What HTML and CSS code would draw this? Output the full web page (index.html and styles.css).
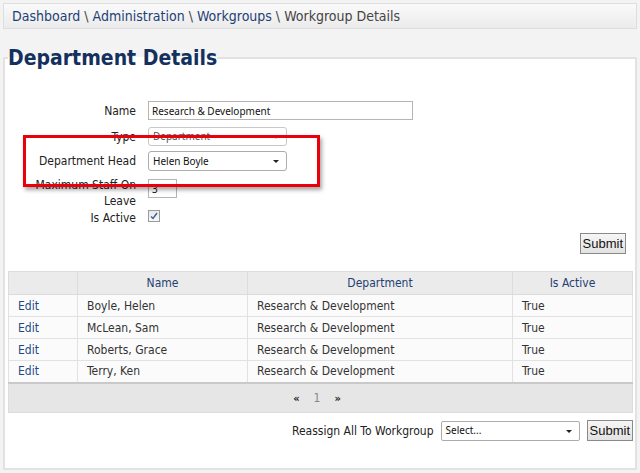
FILE: index.html
```html
<!DOCTYPE html>
<html lang="en">
<head>
  <meta charset="UTF-8">
  <title>Workgroup Details</title>
  <link rel="stylesheet" href="styles.css">
</head>
<body>

<div class="breadcrumb">
  <a href="#">Dashboard</a> \ <a href="#">Administration</a> \ <a href="#">Workgroups</a> \ <span>Workgroup Details</span>
</div>

<fieldset class="details">
  <legend>Department Details</legend>

  <div class="form">
    <div class="row row-name">
      <label for="name">Name</label>
      <input type="text" id="name" class="text wide" value="Research &amp; Development">
    </div>
    <div class="row row-type">
      <label>Type</label>
      <div class="select disabled"><span>Department</span></div>
    </div>
    <div class="row row-head">
      <label>Department Head</label>
      <div class="select"><span>Helen Boyle</span></div>
    </div>
    <div class="row row-leave">
      <label for="leave">Maximum Staff On Leave</label>
      <input type="text" id="leave" class="text short" value="3">
    </div>
    <div class="row row-active">
      <label>Is Active</label>
      <span class="check">
        <svg width="8" height="8" viewBox="0 0 8 8"><path d="M1 4.5 L3 6.5 L7 1" fill="none" stroke="#3d5f9a" stroke-width="1.4"/></svg>
      </span>
    </div>

    <!-- highlight box drawn over the form -->
    <div class="highlight"></div>
  </div>

  <div class="actions">
    <button class="btn">Submit</button>
  </div>

  <table class="grid">
    <thead>
      <tr>
        <th class="c-edit"></th>
        <th class="c-name">Name</th>
        <th class="c-dept">Department</th>
        <th>Is Active</th>
      </tr>
    </thead>
    <tbody>
      <tr><td><a href="#">Edit</a></td><td>Boyle, Helen</td><td>Research &amp; Development</td><td>True</td></tr>
      <tr><td><a href="#">Edit</a></td><td>McLean, Sam</td><td>Research &amp; Development</td><td>True</td></tr>
      <tr><td><a href="#">Edit</a></td><td>Roberts, Grace</td><td>Research &amp; Development</td><td>True</td></tr>
      <tr><td><a href="#">Edit</a></td><td>Terry, Ken</td><td>Research &amp; Development</td><td>True</td></tr>
    </tbody>
    <tfoot>
      <tr>
        <td colspan="4" class="pager"><span class="arrow">&laquo;</span><span class="page">1</span><span class="arrow">&raquo;</span></td>
      </tr>
    </tfoot>
  </table>

  <div class="reassign">
    <label>Reassign All To Workgroup</label>
    <div class="select small"><span>Select...</span></div>
    <button class="btn">Submit</button>
  </div>
</fieldset>

</body>
</html>
```

FILE: styles.css
```css
/* Page */
* {
  box-sizing: border-box;
}

body {
  margin: 0;
  padding: 3px;
  background: #f3f3f3;
  font-family: "DejaVu Sans Condensed", "DejaVu Sans", sans-serif;
  font-size: 12px;
  color: #333;
}

a {
  color: #1f4a86;
  text-decoration: none;
}

/* Breadcrumb bar */
.breadcrumb {
  height: 26px;
  padding: 4px 8px 0;
  background: linear-gradient(#fafafa, #ebebeb);
  border: 1px solid #dedede;
  font-size: 14px;
  color: #444;
}

.breadcrumb a {
  color: #1f3f75;
}

/* Details fieldset */
.details {
  position: relative;
  margin: 16px 0 0;
  padding: 0 0 27px 3px;
  border: 2px solid #e2e2e2;
  background: #fff;
}

.details legend {
  padding: 0;
  font-size: 21px;
  line-height: 26px;
  font-weight: bold;
  color: #14305e;
}

/* Form rows */
.form {
  position: relative;
  margin-top: 30px;
}

.row {
  display: flex;
  align-items: center;
}

.row label {
  width: 128px;
  margin-right: 12px;
  text-align: right;
  color: #222;
}

.row-name { height: 19px; margin-bottom: 7px; }
.row-type { height: 19px; margin-bottom: 5px; }
.row-head { height: 20px; margin-bottom: 8px; }
.row-leave { align-items: flex-start; height: 30px; }
.row-active { height: 14px; }

.row-leave label {
  margin-top: -2px;
  padding-left: 24px;
  line-height: 16px;
}

.row-active label {
  margin-top: 4px;
}

.text {
  height: 19px;
  padding: 0 3px;
  border: 1px solid #b5b5b5;
  font-family: "Noto Sans", sans-serif;
  font-size: 10px;
  color: #111;
  background: #fff;
}

.text.wide { width: 265px; }
.text.short { width: 29px; }

/* Drop-down look */
.select {
  position: relative;
  width: 139px;
  height: 20px;
  padding: 2px 4px;
  border: 1px solid #acacac;
  border-radius: 3px;
  background: #fff;
  font-family: "Noto Sans", sans-serif;
  font-size: 10px;
  color: #111;
}

.select::after {
  content: "";
  position: absolute;
  right: 7px;
  top: 8px;
  border-left: 3px solid transparent;
  border-right: 3px solid transparent;
  border-top: 3px solid #222;
}

.select.disabled {
  height: 19px;
  padding-top: 1px;
  border-color: #c8c8c8;
  color: #555;
}

.select.disabled::after {
  border-top-color: #aaa;
}

.select.small {
  border-radius: 2px;
  padding-top: 1px;
}

.check {
  display: flex;
  align-items: center;
  justify-content: center;
  width: 12px;
  height: 12px;
  border: 1px solid #9a9a9a;
  background: linear-gradient(#e8e8e8, #f8f8f8);
}

.highlight {
  position: absolute;
  left: 15px;
  top: 34px;
  width: 297px;
  height: 52px;
  border: 3px solid #e8000a;
  box-shadow: 2px 3px 4px rgba(0, 0, 0, 0.35);
}

/* Buttons */
.actions {
  display: flex;
  justify-content: flex-end;
  margin: 10px 9px 17px 0;
}

.btn {
  height: 21px;
  padding: 0 2px;
  border: 1px solid #8a8a8a;
  background: linear-gradient(#f6f6f6, #e2e2e2);
  font-family: "Liberation Sans", Arial, sans-serif;
  font-size: 13px;
  color: #111;
}

/* Data grid */
.grid {
  width: 625px;
  border-collapse: collapse;
  border: 1px solid #dcdcdc;
}

.grid th {
  height: 23px;
  background: #ebebeb;
  border: 1px solid #dcdcdc;
  font-weight: normal;
  color: #1f3f75;
}

.grid td {
  height: 22px;
  padding: 0 9px;
  background: #fbfbfb;
  border: 1px solid #e2e2e2;
}

.grid .c-edit { width: 69px; }
.grid .c-name { width: 170px; }
.grid .c-dept { width: 265px; }

.grid tbody tr:last-child td {
  border-bottom: 2px solid #c9c9c9;
}

.grid td.pager {
  height: 30px;
  padding-right: 16px;
  background: #e6e6e6;
  border: none;
  text-align: center;
}

.pager .arrow {
  font-weight: bold;
  font-size: 11px;
  color: #222;
}

.pager .page {
  margin: 0 14px;
  color: #888;
}

/* Reassign row */
.reassign {
  display: flex;
  justify-content: flex-end;
  align-items: center;
  gap: 6px;
  width: 625px;
  margin-top: 7px;
}

.reassign label {
  margin-right: 1px;
  color: #222;
}

.reassign .btn {
  margin-left: 1px;
}
```
